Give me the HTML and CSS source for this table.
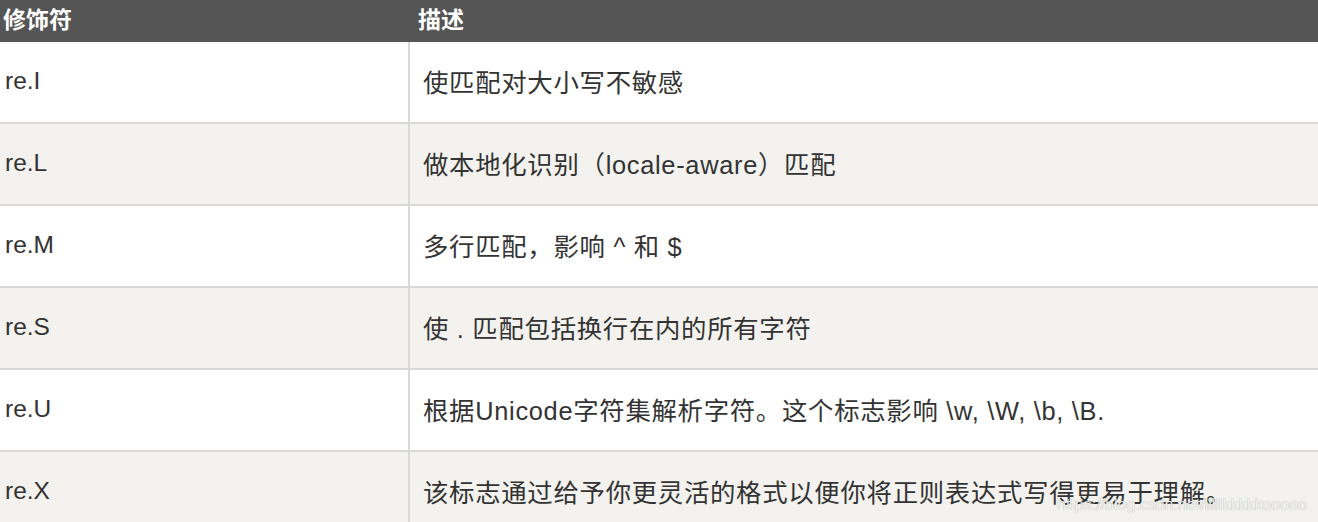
FILE: index.html
```html
<!DOCTYPE html>
<html lang="zh">
<head>
<meta charset="utf-8">
<title>正则表达式修饰符</title>
<link rel="stylesheet" href="styles.css">
</head>
<body>
<div class="table">
  <div class="head">
    <div class="hc c1">修饰符</div>
    <div class="hc c2">描述</div>
  </div>
  <div class="row">
    <div class="cell c1">re.I</div>
    <div class="cell c2">使匹配对大小写不敏感</div>
  </div>
  <div class="row alt">
    <div class="cell c1">re.L</div>
    <div class="cell c2">做本地化识别（locale-aware）匹配</div>
  </div>
  <div class="row">
    <div class="cell c1">re.M</div>
    <div class="cell c2">多行匹配，影响 ^ 和 $</div>
  </div>
  <div class="row alt">
    <div class="cell c1">re.S</div>
    <div class="cell c2">使 . 匹配包括换行在内的所有字符</div>
  </div>
  <div class="row">
    <div class="cell c1">re.U</div>
    <div class="cell c2">根据Unicode字符集解析字符。这个标志影响 \w, \W, \b, \B.</div>
  </div>
  <div class="row alt">
    <div class="cell c1">re.X</div>
    <div class="cell c2">该标志通过给予你更灵活的格式以便你将正则表达式写得更易于理解。</div>
  </div>
</div>
<div class="watermark">https://blog.csdn.net/lllllkkkkkooooo</div>
</body>
</html>
```
FILE: styles.css
```css
html, body {
  margin: 0;
  padding: 0;
  background: #ffffff;
  overflow: hidden;
}
body {
  width: 1318px;
  height: 522px;
  position: relative;
  font-family: "Liberation Sans", "Noto Sans CJK SC", sans-serif;
  color: #333333;
}
.table {
  display: flex;
  flex-direction: column;
}
.head {
  display: flex;
  height: 42px;
  background: #555555;
  color: #ffffff;
  font-weight: bold;
  font-size: 23px;
}
.hc {
  display: flex;
  align-items: center;
  padding-bottom: 7px;
  box-sizing: border-box;
}
.hc.c1 {
  width: 408px;
  padding-left: 3px;
}
.hc.c2 {
  padding-left: 10px;
}
.row {
  display: flex;
  height: 82px;
  box-sizing: border-box;
  border-bottom: 2px solid #d9d9d9;
  background: #ffffff;
  font-size: 25.4px;
}
.row.alt {
  background: #f3f2ee;
}
.cell {
  display: flex;
  align-items: center;
  box-sizing: border-box;
  white-space: nowrap;
  padding-bottom: 3px;
}
.cell.c1 {
  width: 410px;
  padding-left: 5px;
  border-right: 2px solid #d9d9d9;
  font-size: 24.5px;
}
.cell.c2 {
  padding-left: 13px;
  letter-spacing: 0.7px;
}
.watermark {
  position: absolute;
  left: 1057px;
  top: 496px;
  font-family: "Liberation Sans", sans-serif;
  font-size: 16px;
  color: rgba(255, 255, 255, 0.85);
  text-shadow: 0 0 1px rgba(0, 0, 0, 0.35);
  white-space: nowrap;
}
```
